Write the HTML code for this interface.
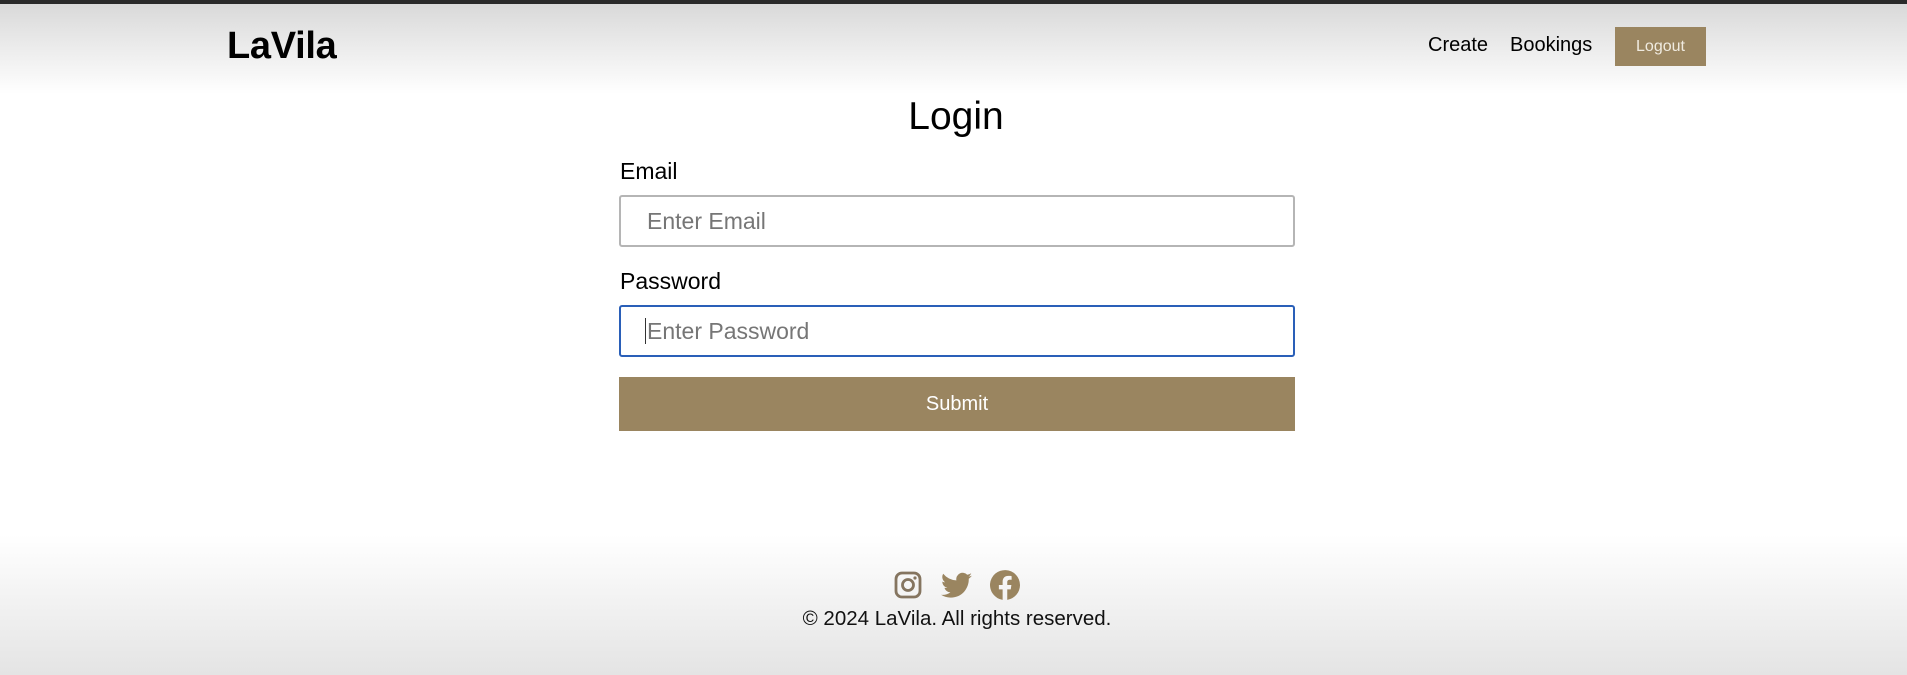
<!DOCTYPE html>
<html><head><meta charset="utf-8"><style>
*{margin:0;padding:0;box-sizing:border-box}
body{width:1907px;height:675px;overflow:hidden;font-family:"Liberation Sans",sans-serif;background:#fff;position:relative;color:#000}
.top{position:absolute;left:0;top:0;width:1907px;height:4px;background:#2a2a2a}
.hdr{position:absolute;left:0;top:4px;width:1907px;height:90px;background:linear-gradient(#d9d9d9,#fff)}
.logo{position:absolute;left:227px;top:25px;font-size:38px;font-weight:bold;letter-spacing:-0.3px}
.nav{position:absolute;top:34px;font-size:20px}
.logout{position:absolute;left:1615px;top:27px;width:91px;height:39px;background:#9a8560;color:#f0ebe0;font-size:16px;text-align:center;line-height:39px}
h1{position:absolute;left:0;width:1912px;text-align:center;top:95px;font-size:39px;font-weight:normal}
.lbl{position:absolute;left:620px;font-size:23px}
.inp{position:absolute;left:619px;width:676px;height:52px;border:2px solid #b5b5b5;border-radius:3px;font-size:23px;color:#767676;padding-left:26px;line-height:48px}
.btn{position:absolute;left:619px;top:377px;width:676px;height:54px;background:#9a8560;color:#fff;font-size:20px;text-align:center;line-height:54px}
.ftr{position:absolute;left:0;top:535px;width:1907px;height:140px;background:linear-gradient(#fff,#e4e4e4)}
.copy{position:absolute;left:0;width:1914px;text-align:center;top:607px;font-size:20.5px;color:#111}
svg{position:absolute}
</style></head><body>
<div class="top"></div>
<div class="hdr"></div>
<div class="logo">LaVila</div>
<div class="nav" style="left:1428px">Create</div>
<div class="nav" style="left:1510px">Bookings</div>
<div class="logout">Logout</div>
<h1>Login</h1>
<div class="lbl" style="top:158px">Email</div>
<div class="inp" style="top:195px">Enter Email</div>
<div class="lbl" style="top:268px">Password</div>
<div class="inp" style="top:305px;border-color:#2a5fb8"><span style="border-left:1.5px solid #333;margin-left:-2px;padding-left:1px">Enter Password</span></div>
<div class="btn">Submit</div>
<div class="ftr"></div>
<svg style="left:894px;top:571px" width="28" height="28" viewBox="0 0 28 28"><rect x="2" y="2" width="24" height="24" rx="6" fill="none" stroke="#857560" stroke-width="2.8"/><circle cx="14" cy="14" r="5.5" fill="none" stroke="#857560" stroke-width="2.8"/><circle cx="21" cy="7" r="1.6" fill="#857560"/></svg>
<svg style="left:941px;top:572px" width="31" height="27" viewBox="0 0 24 20"><path fill="#9a8560" d="M24 2.4c-.9.4-1.8.7-2.8.8 1-.6 1.8-1.6 2.200-2.7-1 .6-2 1-3.1 1.2A4.9 4.9 0 0 0 11.9 6 14 14 0 0 1 1.7.9a4.9 4.9 0 0 0 1.5 6.6c-.8 0-1.600-.2-2.2-.6 0 2.4 1.7 4.4 3.9 4.8-.7.2-1.5.2-2.2.1.6 2 2.4 3.4 4.6 3.4A9.9 9.9 0 0 1 0 17.2 14 14 0 0 0 7.5 19.4c9.1 0 14-7.5 14-14v-.6c1-.7 1.8-1.6 2.5-2.4z"/></svg>
<svg style="left:990px;top:570px" width="30" height="30" viewBox="0 0 24 24"><path fill="#9a8560" d="M24 12a12 12 0 1 0-13.9 11.9v-8.4H7.1V12h3V9.4c0-3 1.8-4.7 4.5-4.7 1.3 0 2.7.2 2.7.2v2.9h-1.5c-1.5 0-2 .9-2 1.9V12h3.3l-.5 3.5h-2.8v8.4A12 12 0 0 0 24 12z"/></svg>
<div class="copy">© 2024 LaVila. All rights reserved.</div>
</body></html>
